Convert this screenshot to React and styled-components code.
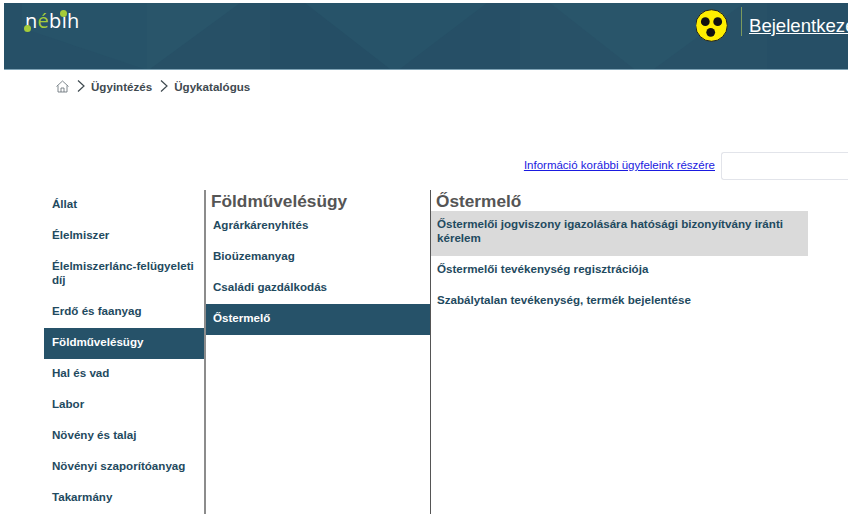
import React from 'react';
import styled, { createGlobalStyle } from 'styled-components';

const GlobalStyle = createGlobalStyle`
  html, body {
    margin: 0;
    padding: 0;
    background: #fff;
    overflow: hidden;
  }
  body {
    font-family: 'Liberation Sans', Arial, sans-serif;
  }
`;

const Page = styled.div`
  width: 854px;
  height: 523px;
  padding: 3px 6px 0 4px;
  box-sizing: border-box;
  overflow: hidden;
`;

const Header = styled.header`
  position: relative;
  height: 66px;
  background: #275369;
  border-bottom: 1px solid #7fa3b5;
  display: flex;
  align-items: flex-start;
  justify-content: space-between;
  overflow: hidden;
`;

const HeaderPattern = styled.svg`
  position: absolute;
  inset: 0;
  width: 100%;
  height: 100%;
`;

const Logo = styled.div`
  position: relative;
  margin: 4px 0 0 21px;
  display: flex;
  font-family: 'Open Sans', sans-serif;
  font-size: 20px;
  line-height: 28px;
  letter-spacing: 0.3px;
`;

const LogoLetter = styled.span`
  color: ${({ green }) => (green ? '#a5cc3a' : '#fff')};
`;

const LogoDot = styled.span`
  position: absolute;
  left: ${({ left }) => left}px;
  top: ${({ top }) => top}px;
  width: 7px;
  height: 7px;
  border-radius: 50%;
  background: #a5cc3a;
`;

const HeaderRight = styled.div`
  position: relative;
  display: flex;
  align-items: flex-start;
  flex-shrink: 0;
  width: 152px;
  margin-top: 4px;
  overflow: hidden;
  white-space: nowrap;
`;

const BlindIcon = styled.svg`
  width: 33px;
  height: 33px;
  margin: 2px 0 0 -1px;
  flex-shrink: 0;
`;

const Divider = styled.span`
  width: 1px;
  height: 29px;
  margin: 0 7px 0 13px;
  background: #7c9a5e;
  flex-shrink: 0;
`;

const LoginLink = styled.a`
  color: #fff;
  font-size: 18.6px;
  line-height: 22px;
  margin-top: 8px;
  text-decoration: underline;
`;

const Breadcrumb = styled.nav`
  display: flex;
  align-items: center;
  height: 16px;
  margin: 8px 0 0 52px;
  color: #3f4a50;
  font-size: 11.6px;
  font-weight: bold;
`;

const Chevron = styled.svg`
  width: 10px;
  height: 14px;
  margin: 0 5px 0 7px;
`;

const HomeIcon = styled.svg`
  width: 13px;
  height: 13px;
`;

const InfoRow = styled.div`
  display: flex;
  justify-content: flex-end;
  align-items: center;
  height: 28px;
  margin-top: 58px;
`;

const InfoLink = styled.a`
  color: #1a1ae0;
  font-size: 11.5px;
  text-decoration: underline;
  margin: 0 6px 2px 0;
  white-space: nowrap;
`;

const SearchInput = styled.input`
  width: 127px;
  height: 28px;
  box-sizing: border-box;
  flex-shrink: 0;
  border: 1px solid #e2e4ea;
  border-right: none;
  border-radius: 3px 0 0 3px;
  background: #fff;
`;

const Catalog = styled.section`
  display: grid;
  grid-template-columns: 162px 225px 1fr;
  height: 324px;
  margin: 10px 0 0 40px;
`;

const Column = styled.div`
  box-sizing: border-box;
  border-right: ${({ divider }) => divider || 'none'};
  min-width: 0;
`;

const ColumnTitle = styled.h2`
  margin: 0;
  height: 21px;
  padding-left: ${({ indent }) => indent}px;
  color: #555;
  font-size: 17.25px;
  line-height: 23px;
  font-weight: bold;
  white-space: nowrap;
`;

const ItemList = styled.ul`
  list-style: none;
  margin: 0;
  padding: 0;
  max-width: ${({ width }) => width || 'none'};
`;

const Item = styled.li`
  box-sizing: border-box;
  padding: ${({ top }) => top}px 4px ${({ top }) => 17 - top}px ${({ indent }) => indent}px;
  font-size: 11.6px;
  line-height: 14px;
  font-weight: bold;
  color: ${({ active }) => (active ? '#fff' : '#1f4a60')};
  background: ${({ active, muted }) => (active ? '#265269' : muted ? '#dadada' : 'transparent')};
`;

const topics = [
  'Állat',
  'Élelmiszer',
  'Élelmiszerlánc-felügyeleti díj',
  'Erdő és faanyag',
  'Földművelésügy',
  'Hal és vad',
  'Labor',
  'Növény és talaj',
  'Növényi szaporítóanyag',
  'Takarmány',
];

const subTopics = ['Agrárkárenyhítés', 'Bioüzemanyag', 'Családi gazdálkodás', 'Őstermelő'];

const cases = [
  'Őstermelői jogviszony igazolására hatósági bizonyítvány iránti kérelem',
  'Őstermelői tevékenység regisztrációja',
  'Szabálytalan tevékenység, termék bejelentése',
];

const App = () => (
  <>
    <GlobalStyle />
    <Page>
      <Header>
        <HeaderPattern viewBox="0 0 844 66" preserveAspectRatio="none">
          <polygon points="0,0 18,0 18,66 0,66" fill="#265067" />
          <polygon points="18,25 140,66 18,66" fill="#265067" />
          <polygon points="236,0 301,0 386,66 146,66" fill="#254e65" />
          <polygon points="483,0 546,0 630,66 396,66" fill="#264f66" />
          <polygon points="650,66 740,0 844,0 844,66" fill="#264f66" />
          <rect x="143" y="0" width="123" height="66" fill="#fff" opacity="0.012" />
          <rect x="516" y="0" width="247" height="66" fill="#fff" opacity="0.012" />
        </HeaderPattern>
        <Logo>
          <LogoLetter>n</LogoLetter>
          <LogoLetter green>é</LogoLetter>
          <LogoLetter>bih</LogoLetter>
          <LogoDot left={-1} top={18} />
          <LogoDot left={35} top={3} />
        </Logo>
        <HeaderRight>
          <BlindIcon viewBox="0 0 33 33">
            <circle cx="16.5" cy="16.5" r="15.8" fill="#ffee00" stroke="#222" strokeWidth="1" />
            <circle cx="10.3" cy="12.7" r="4.4" fill="#111" />
            <circle cx="22.7" cy="12.7" r="4.4" fill="#111" />
            <circle cx="15.7" cy="23.3" r="4.4" fill="#111" />
          </BlindIcon>
          <Divider />
          <LoginLink href="#">Bejelentkezés</LoginLink>
        </HeaderRight>
      </Header>

      <Breadcrumb>
        <HomeIcon viewBox="0 0 13 13" fill="none" stroke="#5f6b72" strokeWidth="0.8">
          <path d="M0.5 6.5 L6.5 1 L12.5 6.5" />
          <path d="M2 5.5 V12 H11 V5.5" />
          <path d="M5 12 V8 H8 V12" />
        </HomeIcon>
        <Chevron viewBox="0 0 10 14" fill="none" stroke="#3f4a50" strokeWidth="1.2">
          <path d="M2 1.5 L8 7 L2 12.5" />
        </Chevron>
        Ügyintézés
        <Chevron viewBox="0 0 10 14" fill="none" stroke="#3f4a50" strokeWidth="1.2">
          <path d="M2 1.5 L8 7 L2 12.5" />
        </Chevron>
        Ügykatalógus
      </Breadcrumb>

      <InfoRow>
        <InfoLink href="#">Információ korábbi ügyfeleink részére</InfoLink>
        <SearchInput type="text" />
      </InfoRow>

      <Catalog>
        <Column divider="2px solid #8c8c8c">
          <ItemList>
            {topics.map((topic) => (
              <Item key={topic} top={6.5} indent={8} active={topic === 'Földművelésügy'}>
                {topic}
              </Item>
            ))}
          </ItemList>
        </Column>
        <Column divider="1px solid #555">
          <ColumnTitle indent={5}>Földművelésügy</ColumnTitle>
          <ItemList>
            {subTopics.map((topic) => (
              <Item key={topic} top={7} indent={7} active={topic === 'Őstermelő'}>
                {topic}
              </Item>
            ))}
          </ItemList>
        </Column>
        <Column>
          <ColumnTitle indent={5}>Őstermelő</ColumnTitle>
          <ItemList width="377px">
            {cases.map((item, index) => (
              <Item key={item} top={5.5} indent={6} muted={index === 0}>
                {item}
              </Item>
            ))}
          </ItemList>
        </Column>
      </Catalog>
    </Page>
  </>
);

export default App;
